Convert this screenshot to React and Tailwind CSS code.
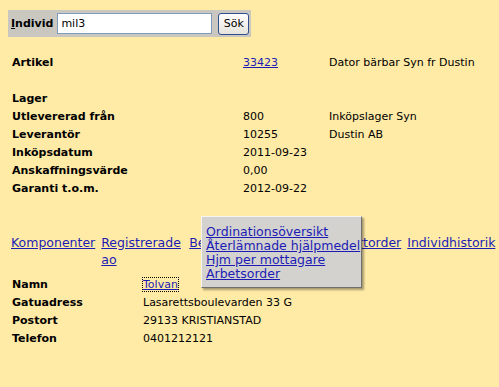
import React from "react";

const font = { fontFamily: '"DejaVu Sans", Verdana, sans-serif' };

const Row = ({ label, v1, v2, first = "w-[231px]" }) => (
  <div className="flex h-[18px] items-center">
    <div className={`${first} shrink-0 font-bold`}>{label}</div>
    <div className="w-[86px] shrink-0">{v1}</div>
    <div>{v2}</div>
  </div>
);

const A = ({ children, className = "" }) => (
  <a href="#" className={`text-[#1c1cb4] underline ${className}`}>
    {children}
  </a>
);

export default function App() {
  return (
    <div
      className="relative min-h-[387px] w-[499px] bg-[#ffeaa6] text-[11px] leading-[13px] text-black"
      style={font}
    >
      <div className="px-2 pt-[10px]">
        <div className="flex h-[27px] w-[243px] items-center gap-[4px] bg-[#cac7c1] pl-[3px]">
          <span className="font-bold">
            <span className="underline">I</span>ndivid
          </span>
          <input
            defaultValue="mil3"
            className="h-[21px] w-[155px] border border-[#7f9db9] bg-white px-[3px] text-[11px] outline-none"
            style={font}
          />
          <button
            className="ml-[2px] h-[22px] w-[31px] rounded-[3px] border border-[#2f4f8f] bg-gradient-to-b from-white to-[#e6e3dc] text-[11px]"
            style={font}
          >
            Sök
          </button>
        </div>
      </div>

      <div className="mt-[16px] px-3">
        <Row label="Artikel" v1={<A>33423</A>} v2="Dator bärbar Syn fr Dustin" />
        <div className="h-[18px]" />
        <Row label="Lager" />
        <Row label="Utlevererad från" v1="800" v2="Inköpslager Syn" />
        <Row label="Leverantör" v1="10255" v2="Dustin AB" />
        <Row label="Inköpsdatum" v1="2011-09-23" />
        <Row label="Anskaffningsvärde" v1="0,00" />
        <Row label="Garanti t.o.m." v1="2012-09-22" />
      </div>

      <div className="mt-[37px] flex items-start gap-[6px] pl-[11px] text-[12.5px] leading-[17px]">
        <A className="whitespace-nowrap">Komponenter</A>
        <A className="w-[82px]">Registrerade ao</A>
        <div className="flex w-[212px] justify-between">
          <A className="whitespace-nowrap">Beställningar</A>
          <A className="whitespace-nowrap">Transportorder</A>
        </div>
        <A className="whitespace-nowrap">Individhistorik</A>
      </div>

      <div className="mt-[7px] px-3">
        <div className="flex h-[18px] items-center">
          <div className="w-[131px] shrink-0 font-bold">Namn</div>
          <A className="no-underline outline outline-1 outline-dotted outline-black">Tolvan</A>
        </div>
        <div className="flex h-[18px] items-center">
          <div className="w-[131px] shrink-0 font-bold">Gatuadress</div>
          <div>Lasarettsboulevarden 33 G</div>
        </div>
        <div className="flex h-[18px] items-center">
          <div className="w-[131px] shrink-0 font-bold">Postort</div>
          <div>29133 KRISTIANSTAD</div>
        </div>
        <div className="flex h-[18px] items-center">
          <div className="w-[131px] shrink-0 font-bold">Telefon</div>
          <div>0401212121</div>
        </div>
      </div>

      <div className="absolute left-[201px] top-[216px] flex w-[161px] flex-col border border-b-[#6f6f6f] border-l-[#f4f4f4] border-r-[#6f6f6f] border-t-[#f4f4f4] bg-[#d4d2cf] pb-[6px] pl-[4px] pt-[8px] text-[12.5px] leading-[14px] shadow-[2px_2px_2px_rgba(0,0,0,0.35)]">
        <A className="whitespace-nowrap">Ordinationsöversikt</A>
        <A className="whitespace-nowrap">Återlämnade hjälpmedel</A>
        <A className="whitespace-nowrap">Hjm per mottagare</A>
        <A className="whitespace-nowrap">Arbetsorder</A>
      </div>
    </div>
  );
}
